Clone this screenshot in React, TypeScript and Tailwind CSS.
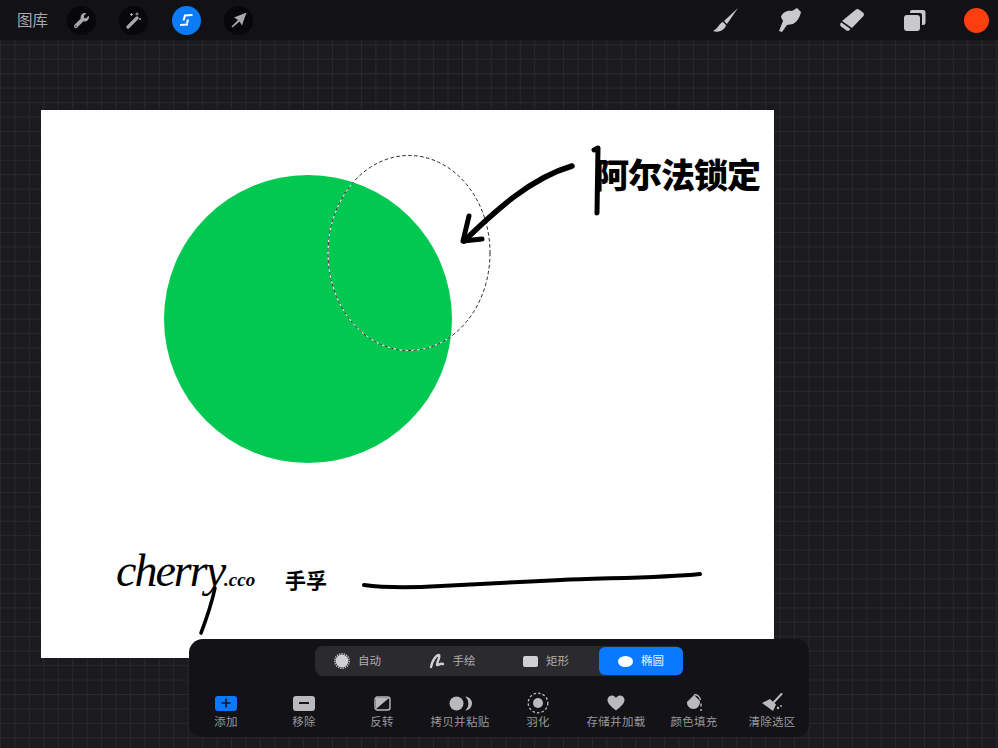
import React from "react";
import { FaWrench } from "react-icons/fa";

const CJK = "font-['Noto_Sans_CJK_SC','Noto_Sans',sans-serif]";

function Round({ active, children }: { active?: boolean; children: React.ReactNode }) {
  return (
    <div className={"flex h-[29px] w-[29px] items-center justify-center rounded-full " + (active ? "bg-[#0a7cfa]" : "bg-[#08080a]")}>
      {children}
    </div>
  );
}

function Tool({ icon, label }: { icon: React.ReactNode; label: string }) {
  return (
    <div className="flex flex-col items-center">
      <div className="flex h-[18px] items-center justify-center">{icon}</div>
      <div className="mt-[1px] whitespace-nowrap text-[11.5px] leading-[16px] tracking-[0.3px] text-[#99989b]">{label}</div>
    </div>
  );
}

function Seg({ icon, label, w }: { icon: React.ReactNode; label: string; w: string }) {
  return (
    <div className={"flex items-center justify-center gap-[8px] " + w}>
      {icon}
      <span className="text-[11.5px] text-[#b0afb2]">{label}</span>
    </div>
  );
}

const g = "#bab9bc";

export default function App() {
  return (
    <div className={"relative h-[748px] w-[998px] overflow-hidden bg-[#1b1a1e] " + CJK}>
      <div className="absolute inset-0 bg-[linear-gradient(to_right,#29282c_1px,transparent_1px),linear-gradient(to_bottom,#29282c_1px,transparent_1px)] bg-[size:14.45px_14.45px] bg-[position:0px_1px]" />

      <header className="relative flex h-[40px] items-center bg-[#121115] pl-[17px] pr-[9px]">
        <span className="text-[15.5px] text-[#a9a8ab]">图库</span>
        <div className="ml-[18.5px] flex gap-[23.5px]">
          <Round>
            <FaWrench className="h-[15px] w-[15px] text-[#a8a7aa]" />
          </Round>
          <Round>
            <svg width="18" height="18" viewBox="0 0 18 18">
              <path d="M3 16 L12 7" stroke="#a8a7aa" strokeWidth="3.2" strokeLinecap="round" />
              <path d="M5 3.5h3M6.5 2v3M12 1.5v3M10.5 3h3M15 7v2M14 8h2" stroke="#a8a7aa" strokeWidth="1" />
            </svg>
          </Round>
          <Round active>
            <svg width="18" height="20" viewBox="0 0 18 20" fill="none">
              <path d="M15.5 5 L8 5.5 L6.5 10.5" stroke="#fff" strokeWidth="2" />
              <path d="M11 9.5 L10 13.5" stroke="#fff" strokeWidth="2" />
              <path d="M3 15 L11 14.5" stroke="#fff" strokeWidth="2.2" />
            </svg>
          </Round>
          <Round>
            <svg width="18" height="18" viewBox="0 0 18 18">
              <path d="M16.5 1.5 L4 6.5 L8 9 L1.5 15.5 L2.5 16.5 L9.5 10.5 L12 14.5 Z" fill="#a8a7aa" />
            </svg>
          </Round>
        </div>
        <div className="ml-auto flex items-center">
          <svg width="28" height="26" viewBox="0 0 28 26" className="mr-[38px]">
            <path d="M26 1 L12 14 L15 17 Z" fill="#c9c8ca" />
            <path d="M11 15 C7 16 7 21 1 24 C7 26 13 23 14 18 Z" fill="#c9c8ca" />
          </svg>
          <svg width="24" height="26" viewBox="0 0 24 26" className="mr-[37px]">
            <path d="M19 1 L23 5 C22 10 19 15 15 17 L9 18 L4 25 L1 24 L5 14 L3 10 C4 6 9 3 14 4 Z" fill="#c9c8ca" />
          </svg>
          <svg width="26" height="24" viewBox="0 0 26 24" className="mr-[38px]">
            <path d="M17 1.5 Q18.5 0.5 20 1.5 L24.5 5 Q25.5 6.5 24.5 8 L13 20 L3 13 Z" fill="#c9c8ca" />
            <path d="M1.5 15 L2.5 14.5 L11.5 21 L10 22.5 Q9 23 7.5 22.5 L2 18.5 Q0.5 17 1.5 15 Z" fill="#c9c8ca" />
          </svg>
          <svg width="23" height="23" viewBox="0 0 23 23" className="mr-[38px]">
            <path d="M7 3 Q7 1 9 1 L20 1 Q22.5 1 22.5 3.5 L22.5 14 Q22.5 16 20 16 L19 16 L19 6 Q19 4 17 4 L7 4 Z" fill="#c9c8ca" />
            <rect x="1" y="6" width="16" height="16" rx="3" fill="#c9c8ca" />
          </svg>
          <div className="h-[25px] w-[25px] rounded-full bg-[#fd3f0f]" />
        </div>
      </header>

      <main className="relative ml-[41px] mt-[70px] h-[548px] w-[733px] bg-white">
        <svg width="733" height="548" viewBox="0 0 733 548" className="absolute inset-0">
          <circle cx="267" cy="209" r="144" fill="#00c851" />
          <ellipse cx="368" cy="143" rx="81" ry="97.5" fill="none" stroke="#fff" strokeWidth="1" />
          <ellipse cx="368" cy="143" rx="81" ry="97.5" fill="none" stroke="#222" strokeWidth="1" strokeDasharray="3.5 2.5" />
          <path d="M531 56 C490 68 455 100 423 131" fill="none" stroke="#000" strokeWidth="5.5" strokeLinecap="round" />
          <path d="M428 106 L422 131 L441 129" fill="none" stroke="#000" strokeWidth="5" strokeLinecap="round" strokeLinejoin="round" />
          <path d="M323 475 C345 478 365 478 400 476 S480 472 520 470 S620 468 659 464" fill="none" stroke="#000" strokeWidth="4" strokeLinecap="round" />
          <path d="M174 478 C170 496 165 510 160 523" fill="none" stroke="#000" strokeWidth="3.5" strokeLinecap="round" />
          <path d="M553 40 L557 38 L556 103" fill="none" stroke="#000" strokeWidth="5" strokeLinecap="round" strokeLinejoin="round" />
        </svg>
        <span className="absolute left-[554px] top-[36px] whitespace-nowrap text-[34px] font-black leading-[56px] tracking-[-1px] text-black">阿尔法锁定</span>
        <span className="absolute left-[75px] top-[436px] whitespace-nowrap font-['Liberation_Serif',serif] text-[46px] italic leading-[50px] tracking-[-2px] text-black">
          cherry<span className="text-[19px] font-bold tracking-[0px]">.cco</span>
        </span>
        <span className="absolute left-[244px] top-[452px] whitespace-nowrap text-[21px] font-bold leading-[34px] text-black">手孚</span>
      </main>

      <section className="absolute left-[189px] top-[639px] h-[98px] w-[620px] rounded-[14px] bg-[#131216] pt-[7px]">
        <div className="ml-[126px] flex h-[30px] w-[368px] items-center rounded-[8px] bg-[#2b2a2e]">
          <Seg
            w="w-[85px]"
            label="自动"
            icon={
              <svg width="16" height="16" viewBox="0 0 16 16">
                <circle cx="8" cy="8" r="6.4" fill="#d0cfd2" />
                <circle cx="8" cy="8" r="7.3" fill="none" stroke="#d0cfd2" strokeWidth="1.4" strokeDasharray="1.2 1.2" />
              </svg>
            }
          />
          <Seg
            w="w-[104px]"
            label="手绘"
            icon={
              <svg width="16" height="16" viewBox="0 0 16 16" fill="none">
                <path d="M2 14 C3 8 7 2 10 2 C12 3 7 11 8 12 C9 12.5 11 10 14 11" stroke="#d0cfd2" strokeWidth="2.4" strokeLinecap="round" />
              </svg>
            }
          />
          <Seg w="w-[84px]" label="矩形" icon={<div className="h-[11px] w-[15px] rounded-[2px] bg-[#d0cfd2]" />} />
          <div className="ml-[11px] flex h-[28px] w-[84px] items-center justify-center gap-[8px] rounded-[6px] bg-[#0a78ff]">
            <div className="h-[11px] w-[15px] rounded-[50%] bg-white" />
            <span className="text-[11.5px] text-[#e8f2ff]">椭圆</span>
          </div>
        </div>

        <div className="-ml-[2px] mt-[18px] grid w-[624px] grid-cols-8">
          <Tool
            label="添加"
            icon={
              <div className="flex h-[15px] w-[22px] items-center justify-center rounded-[3px] bg-[#0a78ff]">
                <svg width="10" height="10" viewBox="0 0 10 10"><path d="M5 0.5v9M0.5 5h9" stroke="#0b1220" strokeWidth="1.6" /></svg>
              </div>
            }
          />
          <Tool
            label="移除"
            icon={
              <div className="flex h-[15px] w-[22px] items-center justify-center rounded-[3px] bg-[#bab9bc]">
                <div className="h-[2px] w-[10px] bg-[#17161a]" />
              </div>
            }
          />
          <Tool
            label="反转"
            icon={
              <svg width="17" height="15" viewBox="0 0 17 15">
                <rect x="1" y="1" width="15" height="13" rx="2.5" fill="#17161a" stroke={g} strokeWidth="1.4" />
                <path d="M2 2 H15 L2 13 Z" fill={g} />
              </svg>
            }
          />
          <Tool
            label="拷贝并粘贴"
            icon={
              <svg width="23" height="15" viewBox="0 0 23 15">
                <circle cx="7.5" cy="7.5" r="7" fill={g} />
                <path d="M16 0.5 A7 7 0 0 1 16 14.5 A9 9 0 0 0 16 0.5 Z" fill={g} />
              </svg>
            }
          />
          <Tool
            label="羽化"
            icon={
              <svg width="22" height="22" viewBox="0 0 22 22">
                <circle cx="11" cy="11" r="9.8" fill="none" stroke={g} strokeWidth="1.3" strokeDasharray="2.6 2" />
                <circle cx="11" cy="11" r="5" fill={g} />
              </svg>
            }
          />
          <Tool
            label="存储并加载"
            icon={
              <svg width="18" height="16" viewBox="0 0 18 16">
                <path d="M9 15.5 C4 11.5 0.5 8.5 0.5 5 C0.5 2.3 2.5 0.5 5 0.5 C6.7 0.5 8.2 1.4 9 3 C9.8 1.4 11.3 0.5 13 0.5 C15.5 0.5 17.5 2.3 17.5 5 C17.5 8.5 14 11.5 9 15.5 Z" fill={g} />
              </svg>
            }
          />
          <Tool
            label="颜色填充"
            icon={
              <svg width="18" height="18" viewBox="0 0 18 18">
                <path d="M9 1 L15 7 C15 12 12 15 8.5 15 C4.5 15 1.5 11.5 2 8 Z" fill={g} />
                <path d="M9 1 C12 0 15 3 15.5 6" fill="none" stroke={g} strokeWidth="1.4" />
                <path d="M16 9.5v3M16 15v2" stroke={g} strokeWidth="1.4" />
              </svg>
            }
          />
          <Tool
            label="清除选区"
            icon={
              <svg width="22" height="20" viewBox="0 0 22 20">
                <path d="M20.5 1 L13 9" stroke={g} strokeWidth="2" strokeLinecap="round" />
                <path d="M9 6 L15 11.5 L12 18 L1 10 Z" fill={g} />
                <circle cx="17" cy="15" r="1.2" fill={g} />
                <circle cx="20" cy="13" r="0.9" fill={g} />
              </svg>
            }
          />
        </div>
      </section>
    </div>
  );
}
